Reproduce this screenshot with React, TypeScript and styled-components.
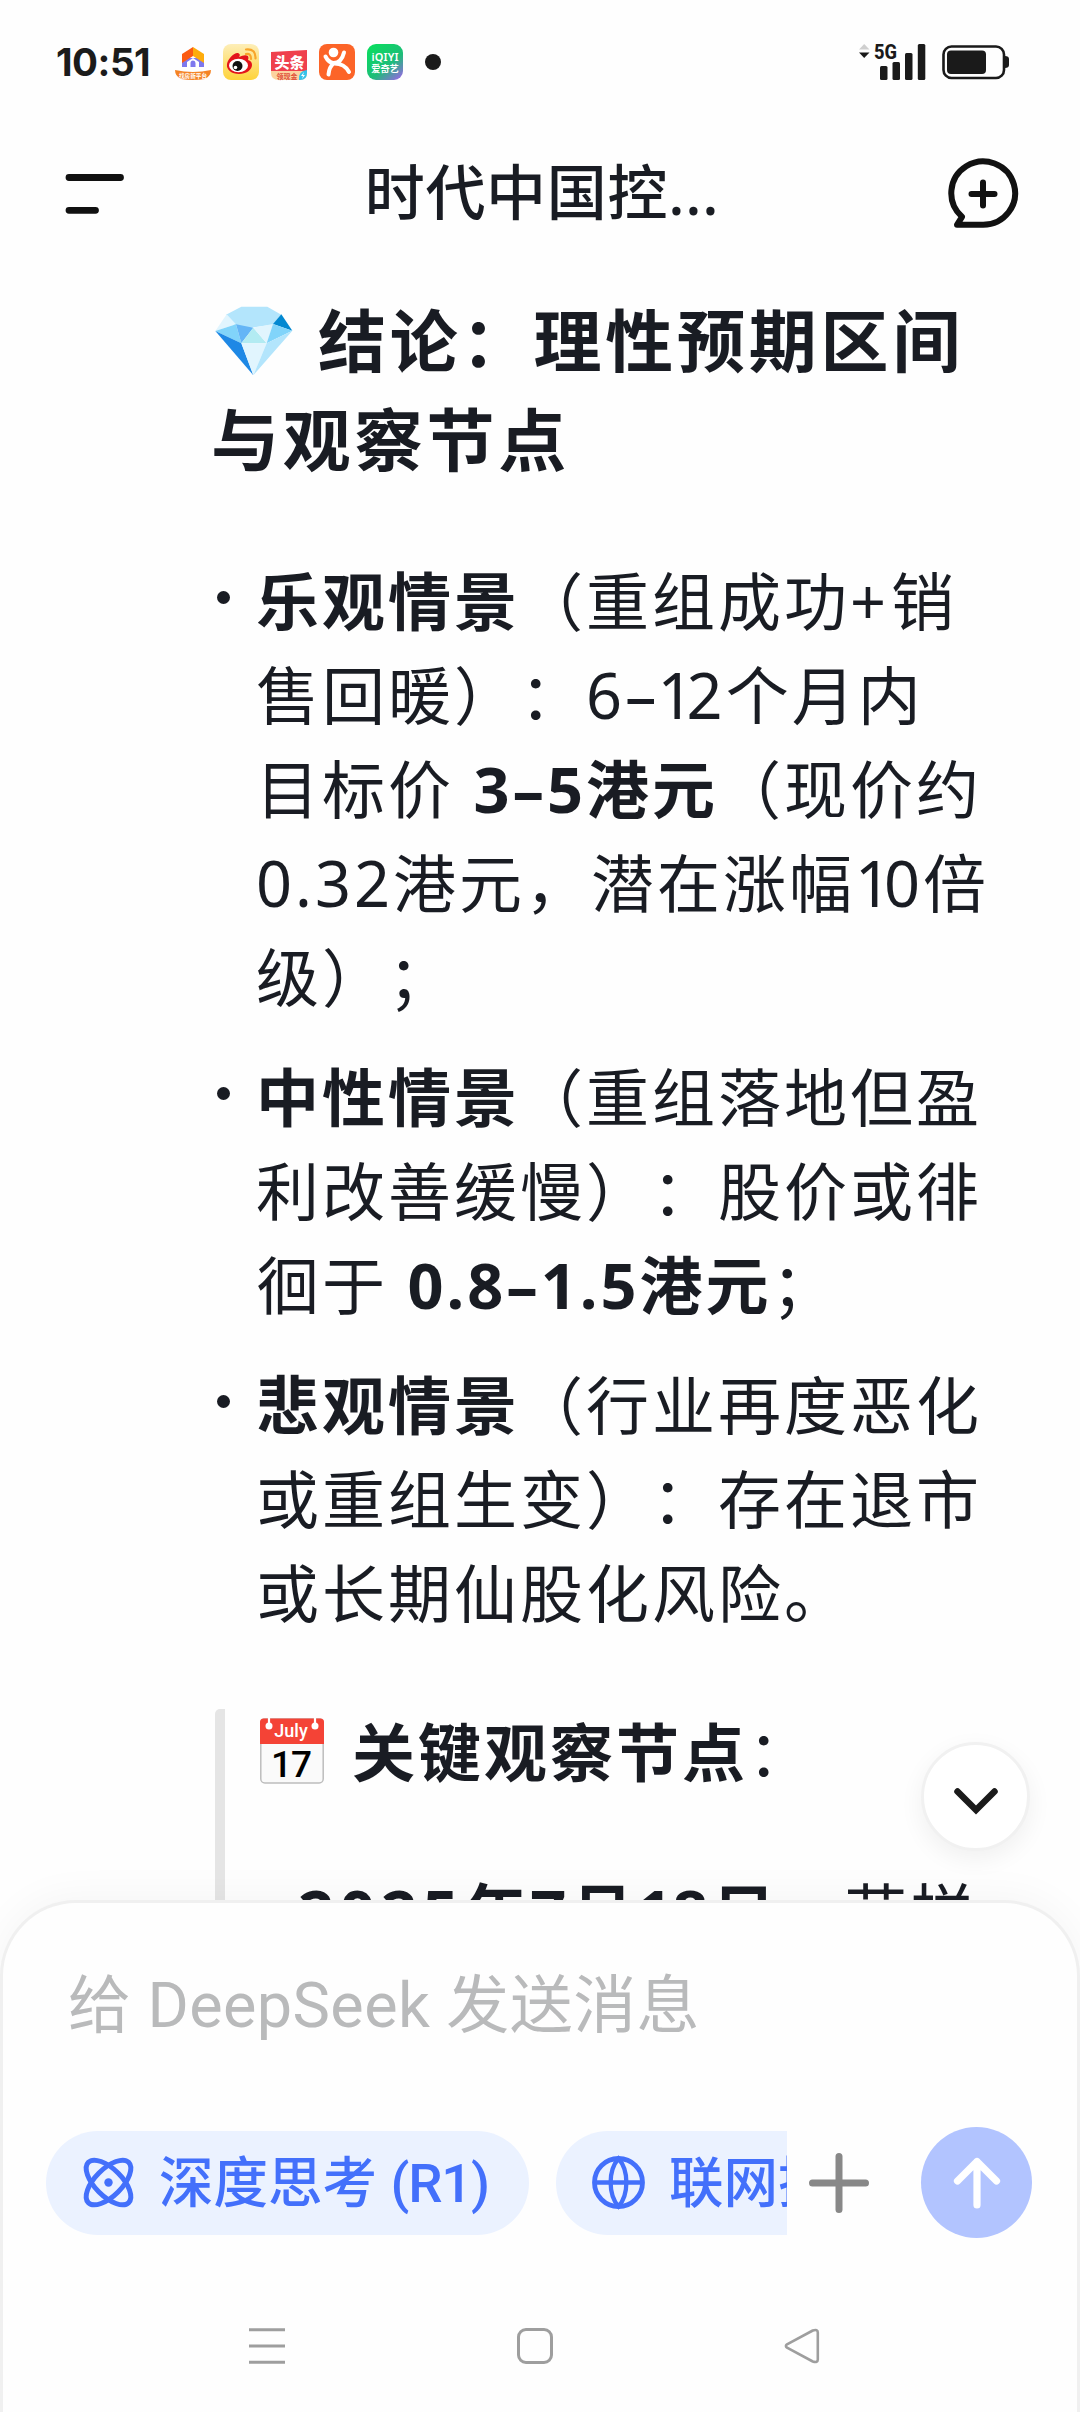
import React from "react";
import styled, { createGlobalStyle } from "styled-components";

const Global = createGlobalStyle`
  * { box-sizing: border-box; }
  body {
    margin: 0;
    background: #fefefe;
    font-family: "Noto Sans", "Noto Sans CJK SC", sans-serif;
    color: #191c23;
    text-spacing-trim: space-all;
  }
  svg { display: block; flex: none; overflow: visible; }
`;

const Screen = styled.div`
  width: 1080px;
  height: 2412px;
  display: flex;
  flex-direction: column;
  overflow: hidden;
  background: #fefefe;
`;

const StatusBar = styled.div`
  height: 124px;
  flex: none;
  display: flex;
  justify-content: space-between;
  align-items: center;
  padding: 0 71px 0 56px;
`;

const StatusLeft = styled.div`
  display: flex;
  align-items: center;
  gap: 12px;
`;

const Clock = styled.span`
  width: 107px;
  font-family: Inter, "Noto Sans", sans-serif;
  font-weight: 700;
  font-size: 38.5px;
  line-height: 44px;
  letter-spacing: -0.5px;
  color: #1b1b1b;
  white-space: nowrap;
`;

const Dot = styled.span`
  width: 16px;
  height: 16px;
  border-radius: 50%;
  background: #1a1a1a;
  margin-left: 10px;
`;

const StatusRight = styled.div`
  display: flex;
  align-items: center;
  gap: 16px;
`;

const Header = styled.header`
  height: 140px;
  flex: none;
  display: flex;
  align-items: center;
  justify-content: space-between;
  padding: 0 60px 0 62px;
`;

const Title = styled.h1`
  margin: 0 0 4px 10px;
  font-size: 60px;
  line-height: 80px;
  font-weight: 500;
  letter-spacing: 0.7px;
  color: #191c23;
  white-space: nowrap;
`;

const Content = styled.main`
  height: 1636px;
  flex: none;
  overflow: hidden;
  padding: 27px 0 0 213px;
`;

const Heading = styled.h2`
  margin: 0;
  font-size: 68px;
  line-height: 99px;
  font-weight: 700;
  letter-spacing: 3.8px;
  white-space: nowrap;
`;

const HeadingLine = styled.div<{ $shift: number }>`
  display: flex;
  align-items: center;
  gap: 25px;
  margin-left: ${(p) => p.$shift}px;
`;

const List = styled.ul`
  list-style: none;
  margin: 65px 0 0;
  padding: 0;
  display: flex;
  flex-direction: column;
  gap: 26px;
`;

const Item = styled.li`
  display: flex;
  font-size: 63px;
  line-height: 94px;
  letter-spacing: 3px;
  white-space: nowrap;
`;

const Bullet = styled.span`
  width: 13px;
  height: 13px;
  flex: none;
  border-radius: 50%;
  background: #191c23;
  margin: 37px 26px 0 4px;
`;

const Quote = styled.blockquote`
  margin: 69px 0 0 2px;
  padding: 0 0 0 35px;
  height: 260px;
  border-radius: 5px 5px 0 0;
  border-left: 10px solid #e5e5e5;
  font-size: 63px;
  line-height: 94px;
  letter-spacing: 3px;
  white-space: nowrap;
`;

const QuoteLine = styled.div`
  display: flex;
  align-items: center;
  height: 86px;
`;

const QuoteTitle = styled.div`
  padding-left: 28px;
`;

const QuoteDetail = styled.div`
  margin-top: 70px;
  padding-left: 38px;
`;

const Composer = styled.section`
  position: relative;
  flex: 1;
  border: 3px solid #f0f0f0;
  border-bottom: 0;
  border-radius: 76px 76px 0 0;
  background: #fefefe;
  box-shadow: 0 -4px 40px rgba(0, 0, 0, 0.04);
  display: flex;
  flex-direction: column;
`;

const Placeholder = styled.div`
  padding: 58px 0 0 65px;
  height: 224px;
  font-family: Roboto, "Noto Sans CJK SC", sans-serif;
  font-size: 63px;
  line-height: 90px;
  letter-spacing: 0.4px;
  color: #b9babb;
  white-space: nowrap;
`;

const Tools = styled.div`
  display: flex;
  align-items: center;
  height: 111px;
  padding: 0 45px 0 43px;
`;

const ChipStrip = styled.div`
  display: flex;
  gap: 27px;
  width: 741px;
  flex: none;
  overflow: hidden;
`;

const Chip = styled.div`
  display: flex;
  align-items: center;
  flex: none;
  width: 483px;
  height: 104px;
  border-radius: 52px;
  padding-left: 36px;
  gap: 24px;
  background: #ebf2ff;
  color: #4370fb;
  font-family: Roboto, "Noto Sans CJK SC", sans-serif;
  font-weight: 500;
  font-size: 54.5px;
  line-height: 80px;
  white-space: nowrap;
`;

const ModelTag = styled.span`
  letter-spacing: -1.2px;
`;

const PlusSlot = styled.div`
  width: 60px;
  margin-left: 22px;
`;

const Send = styled.button`
  width: 111px;
  height: 111px;
  margin-left: auto;
  padding: 0;
  border: 0;
  border-radius: 50%;
  background: #b2c4ff;
  display: flex;
  align-items: center;
  justify-content: center;
`;

const ScrollDown = styled.button`
  position: absolute;
  top: -161px;
  right: 47px;
  width: 109px;
  height: 109px;
  padding: 8px 0 0;
  border: 3px solid #f1f1f1;
  border-radius: 50%;
  background: #fff;
  box-shadow: 0 8px 24px rgba(0, 0, 0, 0.06);
  display: flex;
  align-items: center;
  justify-content: center;
`;

const NavBar = styled.nav`
  display: flex;
  justify-content: space-between;
  align-items: center;
  height: 40px;
  margin-top: 88px;
  padding: 0 257px 0 246px;
`;

const HomeApp = () => (
  <svg width="36" height="36" viewBox="0 0 36 36">
    <path d="M7 14v9h5v-5l6-4z" fill="#7d78ee" />
    <path d="M29 14v9h-5v-5l-6-4z" fill="#7d78ee" />
    <path d="M18 3L7 10v9l11-7z" fill="#fb5b13" />
    <path d="M18 3l11 7v9l-11-7z" fill="#feac0c" />
    <path d="M15.500 23v-4a2.500 2.500 0 0 1 5 0v4z" fill="#7d78ee" />
    <path d="M0 26q18 4 36 0q0 6-6 9q-12 2-24 0q-6-3-6-9z" fill="#f58324" />
    <text x="18" y="34" fontSize="5.600" fontWeight="700" fill="#fff" textAnchor="middle">找房新平台</text>
  </svg>
);

const WeiboApp = () => (
  <svg width="36" height="36" viewBox="0 0 36 36">
    <defs>
      <linearGradient id="wb" x1="0" y1="0" x2="0" y2="1">
        <stop offset="0" stopColor="#fdeeb8" />
        <stop offset="1" stopColor="#fed33a" />
      </linearGradient>
    </defs>
    <rect width="36" height="36" rx="8" fill="url(#wb)" />
    <path d="M4 20C5 14 12 8 15 9q3 1 1 4q6-3 9-1q1 2 0 4q4 1 4 5c0 5-6 9-13 9S3 26 4 20z" fill="#e3141b" />
    <ellipse cx="15.500" cy="21.500" rx="9.500" ry="6.800" fill="#fff" />
    <circle cx="14.500" cy="22" r="5" fill="#111" />
    <circle cx="12.500" cy="23.500" r="1.800" fill="#fff" />
    <path d="M23 10q5-1 5 5M23 5.500q10-1 9.500 9" fill="none" stroke="#f8a52a" strokeWidth="2.200" strokeLinecap="round" />
  </svg>
);

const ToutiaoApp = () => (
  <svg width="36" height="36" viewBox="0 0 36 36">
    <path d="M0 8L36 6v22H0z" fill="#ef404c" />
    <text x="18.500" y="24" fontSize="15" fontWeight="900" fill="#fff" textAnchor="middle">头条</text>
    <path d="M0 27h36v2q0 7-7 7H8q-8 0-8-7z" fill="#fbd3a0" />
    <text x="16" y="34.500" fontSize="7" fontWeight="700" fill="#e0503a" textAnchor="middle">领现金</text>
    <path d="M36 26v3q0 7-7 7h-1q-1-9 8-10z" fill="#35c2ea" />
    <path d="M33 28l-3 4h2l-1 3 3-4h-2z" fill="#fff" />
  </svg>
);

const DianpingApp = () => (
  <svg width="36" height="36" viewBox="0 0 36 36">
    <rect width="36" height="36" rx="8" fill="#fc6428" />
    <circle cx="14.500" cy="8.500" r="4.800" fill="#fff" />
    <path d="M6.500 12.500q3 6 8 6.500q8 0 10.500-10.500M15 19q-5 4-5.500 11.500M15.500 19.500q10 0 14.500 8.500" fill="none" stroke="#fff" strokeWidth="4" strokeLinecap="round" />
  </svg>
);

const IqiyiApp = () => (
  <svg width="36" height="36" viewBox="0 0 36 36">
    <defs>
      <linearGradient id="iq" x1="0.200" y1="0" x2="1" y2="1">
        <stop offset="0" stopColor="#0bdc60" />
        <stop offset="0.550" stopColor="#1dbd78" />
        <stop offset="1" stopColor="#a55cf2" />
      </linearGradient>
    </defs>
    <rect width="36" height="36" rx="9" fill="url(#iq)" />
    <text x="18" y="17" fontSize="11" fontWeight="600" fill="#fff" textAnchor="middle" textLength="27">iQIYI</text>
    <text x="18" y="27.500" fontSize="9.200" fontWeight="700" fill="#fff" textAnchor="middle">爱奇艺</text>
  </svg>
);

const Signal = () => (
  <svg width="68" height="38" viewBox="858 43 68 38">
    <path d="M859 49.500h10.500L864.200 44z" fill="#cfcfcf" />
    <path d="M859 52.500h10.500L864.200 58z" fill="#1a1a1a" />
    <text x="874" y="58.500" fontSize="21" fontWeight="800" fontFamily="Roboto" fill="#1a1a1a" textLength="23" lengthAdjust="spacingAndGlyphs">5G</text>
    <g fill="#1a1a1a">
      <rect x="880" y="66" width="7.500" height="14" rx="1.500" />
      <rect x="892.500" y="62" width="7.500" height="18" rx="1.500" />
      <rect x="905" y="53" width="7.500" height="27" rx="1.500" />
      <rect x="917.800" y="44" width="7.500" height="36" rx="1.500" />
    </g>
  </svg>
);

const Battery = () => (
  <svg width="67" height="36" viewBox="0 0 67 36">
    <rect x="1.500" y="2.500" width="60.500" height="31.500" rx="8" fill="none" stroke="#1a1a1a" strokeWidth="2.600" />
    <rect x="5" y="6.500" width="39" height="23.500" rx="4" fill="#1a1a1a" />
    <path d="M63 12q4 0 4 3v6q0 3-4 3z" fill="#1a1a1a" />
  </svg>
);

const MenuIcon = () => (
  <svg width="66" height="48" viewBox="62 170 66 48">
    <path d="M69 177.500h51.500M69 210.300h26.500" stroke="#111" strokeWidth="6.800" strokeLinecap="round" />
  </svg>
);

const NewChatIcon = () => (
  <svg width="74" height="74" viewBox="946 157 74 74">
    <g fill="none" stroke="#111" strokeWidth="6" strokeLinecap="round" strokeLinejoin="round">
      <path d="M983 224.800H957l5-8A31.900 31.700 0 1 1 983 224.800z" />
      <path d="M971.500 194h23M983 182.500v23" />
    </g>
  </svg>
);

const Diamond = () => (
  <svg width="78" height="70" viewBox="30 50 232 210">
    <path d="M108 52h78l42 24-26 30-70 10-62-13-8-27z" fill="#b3e5fc" />
    <path d="M30 125l34-50 28 30z" fill="#e1f5fe" />
    <path d="M30 125l62-20 16 57z" fill="#81d4fa" />
    <path d="M92 105l52 10-36 47z" fill="#64b5f6" />
    <path d="M144 115l40 47h-76z" fill="#b2ebf2" />
    <path d="M144 115l59-11-19 58z" fill="#e1f5fe" />
    <path d="M203 104l25-29 33 49z" fill="#0288d1" />
    <path d="M203 104l58 20-77 38z" fill="#81d4fa" />
    <path d="M30 125l78 37 36 96z" fill="#1e88e5" />
    <path d="M108 162h76l-40 96z" fill="#e1f5fe" />
    <path d="M184 162l77-38-117 134z" fill="#b3e5fc" />
  </svg>
);

const Calendar = () => (
  <svg width="64" height="66" viewBox="0 1 64 66">
    <rect x="0.800" y="1" width="62.400" height="64" rx="4" fill="#fafafa" stroke="#bdbdbd" strokeWidth="1.500" />
    <path d="M0 26V4q0-3.500 3.500-3.500h57Q64 .5 64 4v22z" fill="#f44336" />
    <path d="M9 0v7M55 0v7" stroke="#fff" strokeWidth="2.200" />
    <circle cx="9" cy="8" r="3.500" fill="#fff" />
    <circle cx="55" cy="8" r="3.500" fill="#fff" />
    <CalendarText x="31" y="19" fontSize="18" $track={0} fill="#fff" textAnchor="middle">July</CalendarText>
    <CalendarText x="31" y="59" fontSize="37" $track={-1} fill="#000" textAnchor="middle">17</CalendarText>
  </svg>
);

const CalendarText = styled.text<{ $track: number }>`
  font-family: Roboto, sans-serif;
  font-weight: 500;
  letter-spacing: ${(p) => p.$track}px;
`;

const AtomIcon = () => (
  <svg width="53" height="53" viewBox="-26.500 -26.500 53 53">
    <g fill="none" stroke="#4370fb" strokeWidth="5">
      <ellipse rx="28.500" ry="13.500" transform="rotate(45)" />
      <ellipse rx="28.500" ry="13.500" transform="rotate(-45)" />
    </g>
    <circle r="4.200" fill="#4370fb" />
  </svg>
);

const GlobeIcon = () => (
  <svg width="53" height="53" viewBox="-26.500 -26.500 53 53">
    <g fill="none" stroke="#4370fb">
      <circle r="24" strokeWidth="4.800" />
      <path d="M0-24C-10.500-12-10.500 12 0 24C10.500 12 10.500-12 0-24z" strokeWidth="4.300" />
      <path d="M-24 0h48" strokeWidth="4.300" />
    </g>
  </svg>
);

const Emph = styled.b`
  font-weight: 700;
`;

const Tracked = styled.span<{ $by: number }>`
  letter-spacing: ${(p) => p.$by}px;
`;

export default function App() {
  return (
    <>
      <Global />
      <Screen>
        <StatusBar>
          <StatusLeft>
            <Clock>10:51</Clock>
            <HomeApp />
            <WeiboApp />
            <ToutiaoApp />
            <DianpingApp />
            <IqiyiApp />
            <Dot />
          </StatusLeft>
          <StatusRight>
            <Signal />
            <Battery />
          </StatusRight>
        </StatusBar>
        <Header>
          <MenuIcon />
          <Title>时代中国控...</Title>
          <NewChatIcon />
        </Header>
        <Content>
          <Heading>
            <HeadingLine $shift={2}>
              <Diamond />
              <span>结论：理性预期区间</span>
            </HeadingLine>
            <HeadingLine $shift={-2}>与观察节点</HeadingLine>
          </Heading>
          <List>
            <Item>
              <Bullet />
              <div>
                <Emph>乐观情景</Emph>（重组成功<Tracked $by={5}>+</Tracked>销
                <br />
                售回暖）：6<Tracked $by={1}>–</Tracked><Tracked $by={-7}>1</Tracked>2个月内
                <br />
                目标价 <Emph>3–5港元</Emph>（现价约
                <br />
                0.32港元，潜在涨幅<Tracked $by={-7}>1</Tracked>0倍
                <br />
                级）；
              </div>
            </Item>
            <Item>
              <Bullet />
              <div>
                <Emph>中性情景</Emph>（重组落地但盈
                <br />
                利改善缓慢）：股价或徘
                <br />
                徊于 <Emph>0.8–1.5港元</Emph>；
              </div>
            </Item>
            <Item>
              <Bullet />
              <div>
                <Emph>悲观情景</Emph>（行业再度恶化
                <br />
                或重组生变）：存在退市
                <br />
                或长期仙股化风险。
              </div>
            </Item>
          </List>
          <Quote>
            <QuoteLine>
              <Calendar />
              <QuoteTitle>
                <Emph>关键观察节点</Emph>：
              </QuoteTitle>
            </QuoteLine>
            <QuoteDetail>
              <Emph>
                <Tracked $by={5.5}>2025</Tracked>年<Tracked $by={4}>7</Tracked>月<Tracked $by={0}>1</Tracked>
                <Tracked $by={4}>8</Tracked>日
              </Emph>
              ，花样
            </QuoteDetail>
          </Quote>
        </Content>
        <Composer>
          <ScrollDown aria-label="scroll down">
            <svg width="50" height="34" viewBox="0 0 50 34">
              <path d="M6.500 7.500L25 26 43.500 7.500" fill="none" stroke="#1b1b1b" strokeWidth="6.500" strokeLinecap="round" strokeLinejoin="miter" />
            </svg>
          </ScrollDown>
          <Placeholder>给 DeepSeek 发送消息</Placeholder>
          <Tools>
            <ChipStrip>
              <Chip>
                <AtomIcon />
                <span>
                  深度思考 <ModelTag>(R1)</ModelTag>
                </span>
              </Chip>
              <Chip>
                <GlobeIcon />
                <span>联网搜索</span>
              </Chip>
            </ChipStrip>
            <PlusSlot>
              <svg width="60" height="60" viewBox="0 0 60 60">
                <path d="M3.500 30h53M30 3.500v53" stroke="#888" strokeWidth="7" strokeLinecap="round" />
              </svg>
            </PlusSlot>
            <Send aria-label="send">
              <svg width="54" height="56" viewBox="0 0 54 56">
                <path d="M27 50V6.500M7.500 26L27 6.500 46.500 26" fill="none" stroke="#fff" strokeWidth="7.200" strokeLinecap="round" strokeLinejoin="round" />
              </svg>
            </Send>
          </Tools>
          <NavBar>
            <svg width="36" height="36" viewBox="0 0 36 36">
              <path d="M0 1.700h36M0 18h36M0 34.300h36" stroke="#9e9e9e" strokeWidth="3" />
            </svg>
            <svg width="36" height="36" viewBox="0 0 36 36">
              <rect x="1.500" y="1.500" width="33" height="33" rx="7.500" fill="none" stroke="#9e9e9e" strokeWidth="3" />
            </svg>
            <svg width="36" height="36" viewBox="0 0 36 36">
              <path d="M28.800 2.500L3 16.300q-2.200 1.700 0 3.400L28.800 33.500Q33.800 35 33.800 31.500V4.500Q33.800 1 28.800 2.500z" fill="none" stroke="#9e9e9e" strokeWidth="2.600" strokeLinejoin="round" />
            </svg>
          </NavBar>
        </Composer>
      </Screen>
    </>
  );
}
